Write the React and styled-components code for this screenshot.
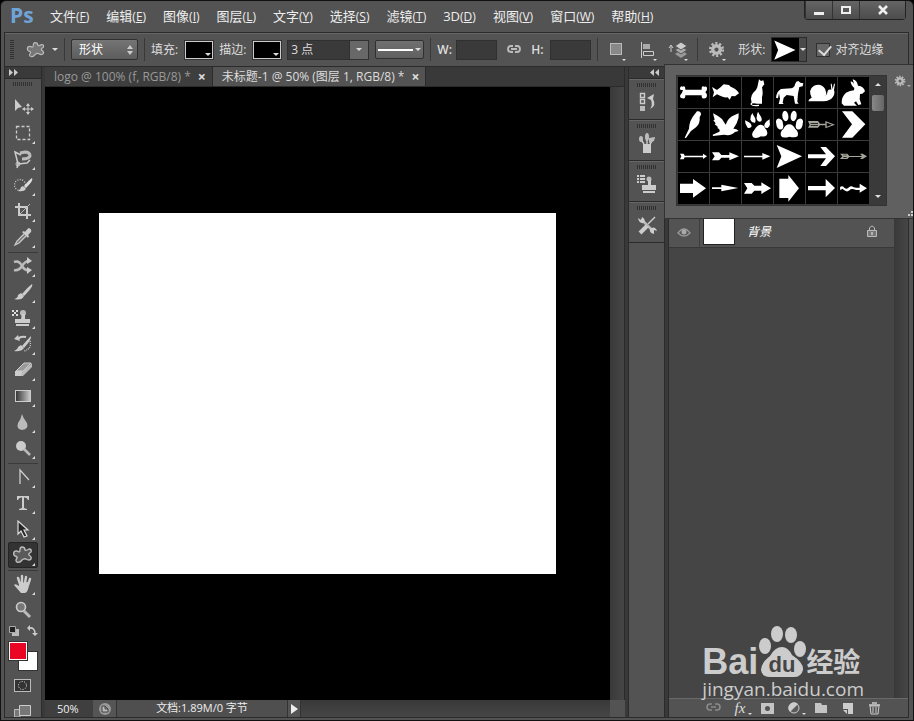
import styled, { createGlobalStyle, css } from "styled-components";

const menus = [
  ["文件", "F"],
  ["编辑", "E"],
  ["图像", "I"],
  ["图层", "L"],
  ["文字", "Y"],
  ["选择", "S"],
  ["滤镜", "T"],
  ["3D", "D"],
  ["视图", "V"],
  ["窗口", "W"],
  ["帮助", "H"],
];

const blob =
  "M12 5Q15 5 15 8Q16 9 19 7Q22 7 21 10Q18 12 19 13Q22 15 21 17Q19 19 16 17Q14 16 12 18Q10 21 7 20Q5 19 7 16Q8 15 5 14Q3 13 4 10Q6 8 9 10Q10 10 10 8Q10 5 12 5Z";

const tools = [
  {
    name: "移动",
    single: true,
    icon: (
      <>
        <path d="M5 5V17L8 14L12 13Z" fill="#ccc" />
        <path d="M18 10V20M13 15H23" stroke="#ccc" />
        <path
          d="M18 9L20 12H16ZM18 21L20 18H16ZM12 15L15 13V17ZM24 15L21 13V17Z"
          fill="#ccc"
        />
      </>
    ),
  },
  {
    name: "矩形选框",
    icon: (
      <rect
        x="6.5"
        y="6.5"
        width="13"
        height="13"
        fill="none"
        stroke="#ccc"
        strokeWidth="1.3"
        strokeDasharray="3 2"
      />
    ),
  },
  {
    name: "磁性套索",
    icon: (
      <>
        <path
          d="M11 9L5 6L8 18L17 17L20 14M8 18L7 22"
          fill="none"
          stroke="#ccc"
          strokeWidth="1.5"
        />
        <path
          d="M10 7L15 6Q20 6 20 10Q19 13 12 13"
          fill="none"
          stroke="#bbb"
          strokeWidth="3"
        />
        <circle cx="8" cy="18" r="2" fill="none" stroke="#ccc" />
      </>
    ),
  },
  {
    name: "快速选择",
    icon: (
      <>
        <circle
          cx="10"
          cy="13"
          r="5.5"
          fill="none"
          stroke="#ccc"
          strokeWidth="1.3"
          strokeDasharray="1 1.5"
        />
        <path d="M22 6Q24 8 16 16L14 14Q19 8 22 6Z" fill="#ddd" />
        <path d="M13 14L16 17Q14 20 8 19Q11 17 11 15Z" fill="#ccc" />
      </>
    ),
  },
  {
    name: "裁剪",
    icon: (
      <>
        <path
          d="M9 5V17H21M5 9H17V21"
          fill="none"
          stroke="#ccc"
          strokeWidth="2"
        />
        <path d="M9 17L20 6" stroke="#bbb" />
      </>
    ),
  },
  {
    name: "吸管",
    icon: (
      <>
        <path
          d="M14 10L7 17L5 21L9 19L16 12"
          fill="#777"
          stroke="#ccc"
          strokeWidth="1.2"
        />
        <path
          d="M12 8L18 14L19 12L18 11L21 8Q22 5 19 4Q18 4 15 8L14 7Z"
          fill="#ccc"
        />
      </>
    ),
    divider: true,
  },
  {
    name: "内容感知移动",
    icon: (
      <>
        <path
          d="M4 9Q9 7 12 13Q15 18 19 17M4 17Q9 18 12 13Q15 8 19 8"
          fill="none"
          stroke="#bbb"
          strokeWidth="2.5"
        />
        <path d="M17 4L22 8L17 11ZM17 14L22 17L17 21Z" fill="#ccc" />
      </>
    ),
  },
  {
    name: "画笔",
    icon: (
      <>
        <path d="M22 5Q24 7 14 17L12 15Q19 7 22 5Z" fill="#ccc" />
        <path d="M11 14L14 17Q12 22 4 20Q8 19 8 16Z" fill="#ccc" />
      </>
    ),
  },
  {
    name: "图案图章",
    icon: (
      <>
        <path
          d="M2 5H4V7H2ZM6 5H8V7H6ZM4 7H6V9H4ZM2 9H4V11H2ZM6 9H8V11H6Z"
          fill="#ddd"
        />
        <circle cx="13" cy="8" r="3" fill="#bbb" />
        <path d="M12 9H15V14H20V18H5V14H11ZM6 19H19V21H6Z" fill="#ccc" />
      </>
    ),
  },
  {
    name: "历史记录画笔",
    icon: (
      <>
        <path d="M21 5Q22 8 14 17L12 15Q18 8 21 5Z" fill="#ccc" />
        <path d="M11 14L14 17Q11 21 4 20Q8 18 8 16Z" fill="#ccc" />
        <path
          d="M16 6Q10 5 8 8"
          fill="none"
          stroke="#ccc"
          strokeWidth="2"
        />
        <path d="M4 8L8 4L10 10Z" fill="#ccc" />
        <path
          d="M20 10Q22 18 14 20"
          fill="none"
          stroke="#ccc"
          strokeWidth="1.3"
          strokeDasharray="1 1"
        />
      </>
    ),
  },
  {
    name: "橡皮擦",
    icon: (
      <>
        <path
          d="M14 6H21L13 14H6Z"
          fill="#999"
          stroke="#ccc"
          strokeWidth="1"
        />
        <path d="M5 14H13L12 19H5Z" fill="#ccc" />
        <path d="M13 14L22 6V10L13 19H11Z" fill="#bbb" />
      </>
    ),
  },
  {
    name: "渐变",
    icon: (
      <>
        <defs>
          <linearGradient id="toolGradient">
            <stop offset="0" stopColor="#333" />
            <stop offset="1" stopColor="#ccc" />
          </linearGradient>
        </defs>
        <rect
          x="5.5"
          y="7.5"
          width="15"
          height="11"
          fill="url(#toolGradient)"
          stroke="#ccc"
        />
      </>
    ),
  },
  {
    name: "模糊",
    icon: (
      <path
        d="M12 5Q13 9 17 14Q19 20 12 21Q6 20 8 14Q11 10 12 5Z"
        fill="#bbb"
      />
    ),
  },
  {
    name: "减淡",
    icon: (
      <>
        <circle cx="11" cy="11" r="5" fill="#ccc" />
        <path d="M14 14L20 20" stroke="#bbb" strokeWidth="2.5" />
      </>
    ),
    divider: true,
  },
  {
    name: "钢笔",
    icon: (
      <path d="M10 20V6L19 16" fill="none" stroke="#ccc" strokeWidth="1.3" />
    ),
  },
  {
    name: "横排文字",
    icon: (
      <path
        d="M7 6H19V10H18Q17 7 14 7.5V18L17 19V20H9V19L12 18V7.5Q9 7 8 10H7Z"
        fill="#ccc"
      />
    ),
  },
  {
    name: "路径选择",
    icon: (
      <path
        d="M8 5V18L11 15L14 21L17 20L14 14H18Z"
        fill="#252525"
        stroke="#ddd"
        strokeWidth="1.2"
      />
    ),
  },
  {
    name: "自定形状",
    active: true,
    icon: <path d={blob} fill="#5a5a5a" stroke="#bbb" strokeWidth="1.4" />,
    divider: true,
  },
  {
    name: "抓手",
    icon: (
      <>
        <path
          d="M10 13L8 7M12 12V5M15 12L16 6M18 14L20 8"
          stroke="#ccc"
          strokeWidth="2.4"
          strokeLinecap="round"
        />
        <path d="M9 12L19 11L19 14Q18 21 15 22H11L4 14Q5 12 9 15Z" fill="#ccc" />
      </>
    ),
  },
  {
    name: "缩放",
    single: true,
    icon: (
      <>
        <circle
          cx="11"
          cy="10"
          r="4.5"
          fill="#777"
          stroke="#ccc"
          strokeWidth="1.6"
        />
        <path d="M14 14L20 20" stroke="#bbb" strokeWidth="3" />
      </>
    ),
  },
];

const shapes = [
  {
    name: "骨头",
    d: "M15 39Q4 40 6 33Q8 26 14 29Q22 25 22 38H71Q70 25 79 29Q87 26 87 34Q89 40 82 46Q89 51 86 60Q84 65 78 64Q71 67 71 55H22Q22 67 14 64Q6 65 6 57Q7 53 12 47Z",
  },
  {
    name: "鱼",
    d: "M6 30L21 39Q34 30 41 22L57 24L62 29Q80 35 87 49L75 58L65 57L59 68L53 61Q40 63 21 52L8 61L12 46Z",
  },
  {
    name: "猫",
    d: "M51 7L57 12L64 10L67 22L60 31Q64 50 60 60V80H46L30 78Q22 60 35 46Q46 37 48 21ZM28 76L31 79Q26 85 42 84L51 83V87Q31 90 25 82Z",
  },
  {
    name: "狗",
    d: "M67 14L73 12L79 17L88 19L86 28L76 30L72 50L70 74L74 80H63L59 57L38 54L29 62L26 77L29 81H14L18 65L15 49L12 64L6 62Q8 43 21 36L52 34Q62 31 63 22Z",
  },
  {
    name: "蜗牛",
    d: "M7 73Q8 65 17 62Q5 38 24 26Q45 17 57 35Q63 47 59 57Q65 49 65 42Q67 37 76 38L74 20H77L80 37L84 20H87L84 39Q88 50 80 61Q72 72 53 73Z",
  },
  {
    name: "兔子",
    d: "M44 7Q57 10 60 26Q78 28 81 43L73 50L66 51L65 67L70 82L61 84L54 73L48 77L57 86H18L11 79Q10 60 24 47Q36 41 48 40L49 33Q38 24 38 13Q44 13 48 21Z",
  },
  {
    name: "鹦鹉",
    d: "M57 7Q69 5 69 17L65 24Q67 44 54 55L39 66L24 87L20 86L33 59Q34 34 50 16Z",
  },
  {
    name: "飞鸟",
    d: "M9 13L24 21L36 30L47 47Q54 26 74 18L86 13Q88 29 80 43L70 59Q79 58 86 66L75 69Q63 82 42 77L9 81L8 77L28 68Q32 62 22 57L24 54L14 46L17 43L10 34L14 32Z",
  },
  {
    name: "爪印",
    d: "M9 34L15 37Q28 42 29 52Q25 60 17 56Q9 48 9 34ZM31 12L35 20Q44 31 39 41Q30 43 25 32Q25 20 31 12ZM48 8L53 17Q62 27 58 37Q48 42 44 30Q43 17 48 8ZM83 31V40Q86 52 77 57Q66 58 67 48Q70 38 83 31ZM55 47Q65 46 69 58Q80 67 74 79Q68 84 57 82Q42 91 33 84Q26 74 37 63Q44 49 55 47Z",
  },
  {
    name: "脚印",
    d: "M7 45a10 14 -20 1 0 20 0a10 14 -20 1 0 -20 0ZM25 21a9 14 -8 1 0 18 0a9 14 -8 1 0 -18 0ZM50 21a9 14 8 1 0 18 0a9 14 8 1 0 -18 0ZM66 45a10 14 20 1 0 20 0a10 14 20 1 0 -20 0ZM46 46Q57 46 64 60Q75 69 71 81Q65 88 46 83Q28 89 21 81Q17 69 28 60Q34 46 46 46Z",
  },
  {
    name: "箭 1",
    muted: true,
    d: "M6 36H36L42 44H58L58 36L87 47L58 58V49H42L36 56H6L11 47ZM14 42V44H36V42ZM14 49V51H36V49ZM62 41V53L78 47Z",
  },
  { name: "V 形", d: "M12 7H43L82 46L43 86H12L42 46Z" },
  { name: "箭 2", d: "M6 38H17L20 44H75V38L87 46L75 54V49H20L17 55H6L10 46Z" },
  {
    name: "箭 3",
    d: "M6 34H27L34 42H58V34L87 46L58 58V50H34L27 58H6L14 46Z",
  },
  { name: "箭 4", d: "M6 44H61V36L85 46L61 56V49H6Z" },
  { name: "箭头", d: "M8 12L84 46L8 81L22 46Z" },
  { name: "箭 5", d: "M6 40H60L43 18H60L87 46L60 75H43L60 52H6Z" },
  {
    name: "箭 6",
    muted: true,
    d: "M6 38H28L34 45H72L66 38H74L87 46L74 54H66L72 48H34L28 54H6L13 46ZM16 41V43H26V41ZM16 49V51H26V49Z",
  },
  { name: "箭 7", d: "M6 32H45V18L84 46L45 74V60H6Z" },
  { name: "箭 8", d: "M6 43H34V35L85 45L34 55V48H6Z" },
  { name: "箭 9", d: "M6 30H29L37 38H58V28L87 46L58 63V53H37L29 62H6L16 46Z" },
  { name: "箭 10", d: "M16 17H43V6L75 46L43 86V75H16Z" },
  { name: "箭 11", d: "M6 39H59V18L87 45L59 73V52H6Z" },
  {
    name: "箭 12",
    d: "M6 43Q12 36 19 44Q26 51 33 43Q39 36 47 43L55 44H65V32L87 46L65 59V51H54Q44 47 38 49Q29 60 19 52L13 47L7 52Z",
  },
];

const docks = [
  {
    name: "历史记录",
    icon: (
      <>
        <path
          d="M4.5 2.5H8.5V6.5H4.5ZM4.5 8.5H8.5V12.5H4.5Z"
          fill="none"
          stroke="#ccc"
          strokeWidth="1.4"
        />
        <path d="M4 15H9V20H4Z" fill="#bbb" />
        <path d="M11 7L18 3L17 8Q21 15 14 18Q17 14 15 9Z" fill="#ccc" />
      </>
    ),
  },
  {
    name: "画笔预设",
    icon: (
      <>
        <path d="M7 12H15V21H7Z" fill="#ccc" />
        <path
          d="M8 12L4 6M11 12V5M14 12L18 6"
          stroke="#ccc"
          strokeWidth="1.4"
        />
        <ellipse cx="5" cy="7" rx="2" ry="3" fill="#bbb" />
        <ellipse cx="11" cy="5" rx="2" ry="4" fill="#bbb" />
        <path d="M13 6L19 5L18 9L13 11Z" fill="#bbb" />
      </>
    ),
  },
  {
    name: "仿制源",
    icon: (
      <>
        <path
          d="M1 3H9M1 6H9M1 9H9"
          stroke="#ccc"
          strokeWidth="2"
          strokeDasharray="2 1 5"
        />
        <circle cx="13" cy="6" r="2.5" fill="#bbb" />
        <path d="M12 7H15V12H20V17H6V12H12ZM7 18H19V20H7Z" fill="#ccc" />
      </>
    ),
  },
  {
    name: "工具预设",
    icon: (
      <>
        <path d="M6 6L17 17" stroke="#bbb" strokeWidth="2.5" />
        <path d="M19 3L12 10" stroke="#ccc" strokeWidth="1.5" />
        <path d="M11 12L4 19" stroke="#ccc" strokeWidth="4" />
        <path
          d="M2 4L5 6L6 3Q10 5 8 9Q3 10 2 4ZM14 15Q19 11 21 17L18 16L18 20Q13 19 14 15Z"
          fill="#ccc"
        />
      </>
    ),
  },
];

const layerActions = [
  {
    name: "链接图层",
    icon: (
      <g fill="none" stroke="#8b8b8b" strokeWidth="1.6">
        <path d="M9 4H7Q4 4 4 7T7 10H9M12 4H14Q17 4 17 7T14 10H12M8 7H13" />
      </g>
    ),
  },
  {
    name: "图层样式",
    more: true,
    fx: true,
  },
  {
    name: "添加蒙版",
    icon: (
      <path
        fillRule="evenodd"
        d="M4 3H17V14H4ZM10.5 6A2.5 2.5 0 1 0 10.5 11A2.5 2.5 0 1 0 10.5 6Z"
        fill="#c4c4c4"
      />
    ),
  },
  {
    name: "调整图层",
    more: true,
    icon: (
      <>
        <circle cx="10" cy="8" r="5" fill="#5a5a5a" stroke="#ccc" />
        <path d="M6 12L14 4A5.5 5.5 0 0 0 6 12Z" fill="#ccc" />
      </>
    ),
  },
  { name: "新建组", icon: <path d="M4 3H10L11 5H16V13H4Z" fill="#c4c4c4" /> },
  {
    name: "新建图层",
    icon: <path d="M5 3H15V14H10V9H5ZM5 10H9V14Z" fill="#ccc" />,
  },
  {
    name: "删除图层",
    icon: (
      <>
        <path d="M4 5H15M7 3H12" stroke="#ccc" strokeWidth="1.5" />
        <path d="M5 6H14L13 14H6ZM8 7V13M11 7V13" fill="none" stroke="#ccc" />
      </>
    ),
  },
];

function Gear({ size }) {
  return (
    <svg width={size} height={size} viewBox="0 0 18 18">
      <circle
        cx="9"
        cy="9"
        r="4"
        fill="none"
        stroke="#bbb"
        strokeWidth="3.5"
      />
      <circle
        cx="9"
        cy="9"
        r="6.5"
        fill="none"
        stroke="#bbb"
        strokeWidth="3"
        strokeDasharray="2.2 1.884"
      />
    </svg>
  );
}

function LinkIcon() {
  return (
    <svg width="16" height="12" viewBox="0 0 16 12">
      <path
        d="M7 2H5Q2 2 2 5T5 8H7M9 2H11Q14 2 14 5T11 8H9M5 5H11"
        fill="none"
        stroke="#bbb"
        strokeWidth="1.8"
      />
    </svg>
  );
}

function TitleBar() {
  return (
    <TitleRow>
      <Logo>Ps</Logo>
      <MenuNav>
        {menus.map(([label, key]) => (
          <MenuButton key={key}>
            {label}
            <Mnemonic>
              (<u>{key}</u>)
            </Mnemonic>
          </MenuButton>
        ))}
      </MenuNav>
      <WindowControls>
        <WindowButton aria-label="最小化">
          <svg width="12" height="12">
            <path d="M1 8H11V11H1Z" fill="#eee" />
          </svg>
        </WindowButton>
        <WindowButton aria-label="最大化">
          <svg width="12" height="12">
            <path d="M2 3H10V9H2Z" fill="none" stroke="#eee" strokeWidth="2" />
          </svg>
        </WindowButton>
        <WindowButton aria-label="关闭" $wide>
          <svg width="12" height="12">
            <path d="M2 2L10 10M10 2L2 10" stroke="#eee" strokeWidth="2.5" />
          </svg>
        </WindowButton>
      </WindowControls>
    </TitleRow>
  );
}

function OptionsBar() {
  return (
    <OptionsRow>
      <Grip $upright />
      <CurrentTool aria-label="自定形状工具">
        <svg width="24" height="24" viewBox="0 0 26 26">
          <path d={blob} fill="#777" stroke="#bbb" strokeWidth="1.2" />
        </svg>
        <Caret />
      </CurrentTool>
      <Rule />
      <ModeWrap>
        <ModeSelect aria-label="工具模式" defaultValue="形状">
          <option>形状</option>
          <option>路径</option>
          <option>像素</option>
        </ModeSelect>
        <svg width="6" height="10">
          <path d="M3 0L6 4H0ZM0 6H6L3 10Z" fill="#ccc" />
        </svg>
      </ModeWrap>
      <Rule />
      <Field $wide>
        <span>填充:</span>
        <Swatch aria-label="填充颜色">
          <Caret />
        </Swatch>
      </Field>
      <Field $wide>
        <span>描边:</span>
        <Swatch aria-label="描边颜色">
          <Caret />
        </Swatch>
      </Field>
      <Combo>
        <ComboInput aria-label="描边宽度" defaultValue="3 点" />
        <ComboButton aria-label="选择描边宽度">
          <Caret />
        </ComboButton>
      </Combo>
      <LineButton aria-label="描边类型">
        <Stroke />
        <Caret />
      </LineButton>
      <Rule />
      <Field>
        <Axis htmlFor="shapeWidth">W:</Axis>
        <SizeInput id="shapeWidth" />
      </Field>
      <LinkButton aria-label="链接宽高">
        <LinkIcon />
      </LinkButton>
      <Field>
        <Axis htmlFor="shapeHeight">H:</Axis>
        <SizeInput id="shapeHeight" />
      </Field>
      <Rule />
      <IconButton aria-label="路径操作" $more>
        <svg width="18" height="18">
          <rect
            x="2.5"
            y="2.5"
            width="11"
            height="11"
            fill="#888"
            stroke="#bbb"
          />
        </svg>
      </IconButton>
      <IconButton aria-label="路径对齐" $more>
        <svg width="18" height="18">
          <path d="M2.5 1V17" stroke="#ccc" />
          <path d="M4 3H11V8H4Z" fill="#aaa" />
          <path d="M4.5 10.5H14.5V14.5H4.5Z" fill="none" stroke="#ccc" />
        </svg>
      </IconButton>
      <IconButton aria-label="路径排列" $more>
        <svg width="22" height="18">
          <path d="M3 5V11M1 7L3 4L5 7" fill="none" stroke="#ccc" />
          <path d="M7 13L13 9L19 13L13 17Z" fill="#999" />
          <path d="M7 9L13 5L19 9L13 13Z" fill="#aaa" stroke="#555" />
          <path d="M7 5L13 1L19 5L13 9Z" fill="#ccc" stroke="#555" />
        </svg>
      </IconButton>
      <Rule />
      <IconButton aria-label="几何选项" $more>
        <Gear size={17} />
      </IconButton>
      <ShapeField>
        <span>形状:</span>
        <ShapeButton aria-label="选择形状">
          <svg width="26" height="24" viewBox="0 6 93 80">
            <path d={shapes[15].d} fill="#fff" />
          </svg>
          <Caret />
        </ShapeButton>
      </ShapeField>
      <CheckField>
        <input type="checkbox" defaultChecked />
        对齐边缘
      </CheckField>
    </OptionsRow>
  );
}

function ToolPanel() {
  return (
    <ToolColumn>
      <PanelTop>
        <svg width="10" height="7">
          <path d="M0 0L4 3.5L0 7ZM5 0L9 3.5L5 7Z" fill="#ccc" />
        </svg>
      </PanelTop>
      <GripRow>
        <Grip />
      </GripRow>
      {tools.map((tool) => (
        <ToolSlot key={tool.name} $divider={tool.divider}>
          <ToolButton aria-label={tool.name} $active={tool.active}>
            <svg width="26" height="26" viewBox="0 0 26 26">
              {tool.icon}
              {!tool.single && <path d="M25 21V24H22Z" fill="#ddd" />}
            </svg>
          </ToolButton>
        </ToolSlot>
      ))}
      <MiniRow>
        <MiniButton aria-label="默认颜色">
          <svg width="12" height="12">
            <path d="M4 4H11V11H4Z" fill="#bbb" />
            <path d="M1.5 1.5H7.5V7.5H1.5Z" fill="#222" stroke="#aaa" />
          </svg>
        </MiniButton>
        <MiniButton aria-label="切换颜色">
          <svg width="12" height="12">
            <path
              d="M3 3Q9 2 9 9"
              fill="none"
              stroke="#ccc"
              strokeWidth="1.5"
            />
            <path d="M1 3L4 0V6ZM6 8H12L9 11Z" fill="#ccc" />
          </svg>
        </MiniButton>
      </MiniRow>
      <Colors>
        <ColorChip aria-label="背景色" $color="#fff" $back />
        <ColorChip aria-label="前景色" $color="#eb0524" />
      </Colors>
      <MaskButton aria-label="快速蒙版">
        <svg width="18" height="14">
          <rect
            x="0.5"
            y="0.5"
            width="16"
            height="12"
            fill="#333"
            stroke="#bbb"
          />
          <circle
            cx="8.5"
            cy="6.5"
            r="4"
            fill="none"
            stroke="#eee"
            strokeDasharray="1 1.5"
          />
        </svg>
      </MaskButton>
      <MaskButton aria-label="屏幕模式">
        <svg width="18" height="14">
          <path d="M0.5 4.5H6V12H0.5Z" fill="#777" stroke="#bbb" />
          <path d="M5.5 0.5H16.5V10.5H5.5Z" fill="#777" stroke="#ccc" />
        </svg>
      </MaskButton>
    </ToolColumn>
  );
}

function DocumentArea() {
  return (
    <DocumentColumn>
      <Tabs>
        <Tab>
          <TabName>logo @ 100% (f, RGB/8) *</TabName>
          <TabClose aria-label="关闭 logo">×</TabClose>
        </Tab>
        <Tab $active>
          <TabName>未标题-1 @ 50% (图层 1, RGB/8) *</TabName>
          <TabClose aria-label="关闭 未标题-1">×</TabClose>
        </Tab>
      </Tabs>
      <CanvasRow>
        <Stage>
          <Artboard />
        </Stage>
        <Track />
      </CanvasRow>
      <StatusRow>
        <ZoomInput aria-label="缩放" defaultValue="50%" />
        <StatusButton aria-label="共享">
          <svg width="14" height="14">
            <circle cx="7" cy="7" r="6" fill="#999" />
            <path d="M4 4H7L10 7V10H4ZM7 4V7H10" fill="#bbb" stroke="#444" />
          </svg>
        </StatusButton>
        <StatusText>文档:1.89M/0 字节</StatusText>
        <StatusButton aria-label="状态选项" $narrow>
          <svg width="8" height="10">
            <path d="M1 0L8 5L1 10Z" fill="#eee" />
          </svg>
        </StatusButton>
        <StatusTrack />
        <StatusCorner />
      </StatusRow>
    </DocumentColumn>
  );
}

function Dock() {
  return (
    <DockColumn>
      <PanelTop $dock>
        <svg width="10" height="7">
          <path d="M4 0L0 3.5L4 7ZM9 0L5 3.5L9 7Z" fill="#ccc" />
        </svg>
      </PanelTop>
      {docks.map((item) => (
        <DockItem key={item.name}>
          <Grip />
          <DockButton aria-label={item.name}>
            <svg width="22" height="22" viewBox="0 0 22 22">
              {item.icon}
            </svg>
          </DockButton>
        </DockItem>
      ))}
    </DockColumn>
  );
}

function LayersPanel() {
  return (
    <LayersColumn>
      <LayersHeader />
      <LayersBody>
        <LayerList>
          <Layer>
            <EyeButton aria-label="可见性">
              <svg width="14" height="10">
                <path
                  d="M1 6Q7 -2 13 6Q7 12 1 6Z"
                  fill="none"
                  stroke="#999"
                  strokeWidth="1.3"
                />
                <circle cx="7" cy="5" r="2.5" fill="#aaa" />
              </svg>
            </EyeButton>
            <Thumb />
            <LayerName>背景</LayerName>
            <svg width="12" height="13">
              <path d="M3.5 6V3Q6 -1 8.5 3V6" fill="none" stroke="#bbb" />
              <path
                d="M1.5 5.5H10.5V11.5H1.5Z"
                fill="#777"
                stroke="#bbb"
              />
              <path d="M6 7V10" stroke="#eee" />
            </svg>
          </Layer>
        </LayerList>
        <LayerTrack />
      </LayersBody>
      <LayersFooter>
        {layerActions.map((action) => (
          <LayerAction
            key={action.name}
            aria-label={action.name}
            $more={action.more}
          >
            {action.fx ? (
              <Fx>fx</Fx>
            ) : (
              <svg width="21" height="16">
                {action.icon}
              </svg>
            )}
          </LayerAction>
        ))}
      </LayersFooter>
    </LayersColumn>
  );
}

function ShapePicker() {
  return (
    <Picker>
      <PickerBox>
        <ShapeGrid>
          {shapes.map((shape) => (
            <ShapeCell key={shape.name} aria-label={shape.name}>
              <svg width="31" height="31" viewBox="0 0 93 93">
                <path
                  d={shape.d}
                  fill={shape.muted ? "#a5a59b" : "#fff"}
                  fillRule="evenodd"
                />
              </svg>
            </ShapeCell>
          ))}
        </ShapeGrid>
        <PickerScroll>
          <Caret $up />
          <PickerThumb />
          <Caret />
        </PickerScroll>
      </PickerBox>
      <PickerGear aria-label="形状选项">
        <Gear size={12} />
        <SmallCaret />
      </PickerGear>
      <ResizeMark width="5" height="5">
        <path d="M3 0H5V2H3ZM0 3H2V5H0ZM3 3H5V5H3Z" fill="#ccc" />
      </ResizeMark>
    </Picker>
  );
}

function Watermark() {
  return (
    <Mark>
      <MarkRow>
        <MarkLatin>Bai</MarkLatin>
        <svg width="48" height="53" viewBox="2 1 48 53">
          <g fill="#ccc">
            <ellipse cx="9" cy="22" rx="6" ry="8" />
            <ellipse cx="21" cy="10" rx="6" ry="8" />
            <ellipse cx="35" cy="11" rx="6" ry="8" />
            <ellipse cx="44" cy="25" rx="6" ry="8" />
            <path d="M26 23Q32 23 36 31Q48 39 47 46Q45 54 36 53H16Q6 54 5 46Q5 39 14 32Q19 23 26 23Z" />
          </g>
          <text
            x="26"
            y="48"
            textAnchor="middle"
            fill="#454545"
            fontFamily="Liberation Sans"
            fontSize="22"
            fontWeight="700"
          >
            du
          </text>
        </svg>
        <MarkChinese>经验</MarkChinese>
      </MarkRow>
      <MarkUrl>jingyan.baidu.com</MarkUrl>
    </Mark>
  );
}

export default function App() {
  return (
    <Window>
      <GlobalStyle />
      <TitleBar />
      <OptionsBar />
      <Workspace>
        <ToolPanel />
        <DocumentArea />
        <Dock />
        <LayersPanel />
      </Workspace>
      <ShapePicker />
      <Watermark />
    </Window>
  );
}

const GlobalStyle = createGlobalStyle`
  * {
    box-sizing: border-box;
  }
  body {
    margin: 0;
    background: #000;
    color: #ddd;
    font-family: "Open Sans", "Noto Sans CJK SC", sans-serif;
    font-size: 12px;
    line-height: 16px;
  }
  button,
  input,
  select {
    margin: 0;
    padding: 0;
    border: 0;
    border-radius: 0;
    background: none;
    color: inherit;
    font: inherit;
  }
  svg {
    display: block;
    flex: none;
  }
`;

const center = css`
  display: flex;
  align-items: center;
  justify-content: center;
`;

const Window = styled.div`
  position: relative;
  display: flex;
  flex-direction: column;
  height: 100vh;
  overflow: hidden;
  background: #535353;
  border: 1px solid #111;
  border-radius: 6px 6px 0 0;
  padding: 0 4px 2px 3px;
`;

const TitleRow = styled.header`
  display: flex;
  height: 31px;
  flex: none;
  padding-right: 3px;
`;

const Logo = styled.div`
  width: 40px;
  padding-left: 6px;
  color: #70a4d8;
  font-size: 21px;
  font-weight: 700;
  line-height: 28px;
`;

const MenuNav = styled.nav`
  display: flex;
  flex: 1;
  gap: 17px;
  padding: 0 0 1px 6px;
`;

const MenuButton = styled.button`
  font-size: 13px;
  white-space: nowrap;
  color: #eee;
`;

const Mnemonic = styled.span`
  font-size: 12px;
`;

const WindowControls = styled.div`
  display: flex;
  height: 19px;
  border: 1px solid #222;
  border-top: 0;
  border-radius: 0 0 4px 4px;
`;

const WindowButton = styled.button`
  ${center}
  width: ${(p) => (p.$wide ? 46 : 27)}px;
  background: linear-gradient(#656565, #4c4c4c);
  border-left: 1px solid #333;
`;

const OptionsRow = styled.div`
  display: flex;
  align-items: center;
  gap: 6px;
  height: 34px;
  flex: none;
  padding-left: 5px;
  border: 1px solid #2b2b2b;
  border-bottom: 0;
  box-shadow: inset 0 1px #666;
  white-space: nowrap;
`;

const Grip = styled.div`
  flex: none;
  width: ${(p) => (p.$upright ? 4 : 20)}px;
  height: ${(p) => (p.$upright ? 20 : 4)}px;
  background: repeating-linear-gradient(
    ${(p) => (p.$upright ? "180deg" : "90deg")},
    #303030 0 1px,
    #555 1px 2px
  );
`;

const Caret = styled.i`
  border: 3px solid transparent;
  ${(p) =>
    p.$up
      ? "border-bottom-color: #ddd; border-top: 0;"
      : "border-top-color: #ddd; border-bottom: 0;"}
`;

const SmallCaret = styled.i`
  border: 2px solid transparent;
  border-top-color: #aaa;
  border-bottom: 0;
`;

const CurrentTool = styled.button`
  display: flex;
  align-items: center;
  gap: 4px;
  padding-left: 4px;
`;

const Rule = styled.div`
  flex: none;
  width: 1px;
  height: 23px;
  background: #383838;
`;

const ModeWrap = styled.div`
  display: flex;
  align-items: center;
  width: 67px;
  height: 21px;
  padding-right: 4px;
  background: linear-gradient(#757575, #5c5c5c);
  border: 1px solid #303030;
  border-radius: 2px;
`;

const ModeSelect = styled.select`
  appearance: none;
  flex: 1;
  min-width: 0;
  padding-left: 7px;
  color: #fff;
`;

const Field = styled.div`
  display: flex;
  align-items: center;
  gap: ${(p) => (p.$wide ? 7 : 5)}px;
`;

const ShapeField = styled(Field)`
  gap: 6px;
  padding: 0 3px;
`;

const Swatch = styled.button`
  display: flex;
  align-items: flex-end;
  justify-content: flex-end;
  width: 28px;
  height: 18px;
  padding: 0 1px 2px 0;
  background: #000;
  border: 1px solid #ccc;
  box-shadow: 0 0 0 1px #333;
`;

const Combo = styled.div`
  display: flex;
  height: 20px;
  border: 1px solid #303030;
`;

const ComboInput = styled.input`
  width: 61px;
  padding-left: 3px;
  background: #3a3a3a;
`;

const ComboButton = styled.button`
  ${center}
  width: 19px;
  background: #686868;
  border-left: 1px solid #303030;
`;

const LineButton = styled.button`
  ${center}
  gap: 2px;
  width: 49px;
  height: 19px;
  background: linear-gradient(#707070, #606060);
  border: 1px solid #303030;
  border-radius: 2px;
`;

const Stroke = styled.span`
  width: 35px;
  height: 2px;
  background: #fff;
`;

const Axis = styled.label`
  width: 14px;
  font-weight: 600;
`;

const SizeInput = styled.input`
  width: 41px;
  height: 20px;
  background: #3a3a3a;
  border: 1px solid #303030;
`;

const IconButton = styled.button`
  ${center}
  position: relative;
  width: 25px;
  height: 26px;
  ${(p) =>
    p.$more &&
    css`
      &::after {
        content: "";
        position: absolute;
        right: 3px;
        bottom: 2px;
        border: 2px solid transparent;
        border-top-color: #ddd;
        border-bottom: 0;
      }
    `}
`;

const LinkButton = styled(IconButton)`
  width: 22px;
`;

const ShapeButton = styled.button`
  display: flex;
  align-items: center;
  gap: 2px;
  width: 36px;
  height: 25px;
  background: linear-gradient(90deg, #000 27px, #4a4a4a 27px);
  border: 1px solid #2b2b2b;
`;

const CheckField = styled.label`
  display: flex;
  align-items: center;
  gap: 5px;
  input {
    appearance: none;
    width: 14px;
    height: 14px;
    background: #666;
    border: 1px solid #303030;
  }
  input:checked::before {
    content: "";
    display: block;
    width: 6px;
    height: 10px;
    margin: -1px 0 0 4px;
    border: solid #ddd;
    border-width: 0 2px 2px 0;
    transform: rotate(40deg);
  }
`;

const Workspace = styled.main`
  display: flex;
  flex: 1;
  min-height: 0;
  gap: 3px;
  background: #393939;
  border: 1px solid #2b2b2b;
`;

const ToolColumn = styled.aside`
  display: flex;
  flex-direction: column;
  align-items: center;
  width: 37px;
  flex: none;
  overflow: hidden;
  background: #535353;
  border-right: 1px solid #2b2b2b;
`;

const PanelTop = styled.div`
  display: flex;
  align-items: center;
  align-self: stretch;
  justify-content: ${(p) => (p.$dock ? "flex-end" : "flex-start")};
  height: 12px;
  flex: none;
  padding: 0 4px;
  background: #3a3a3a;
  border-bottom: 1px solid #2b2b2b;
`;

const GripRow = styled.div`
  height: 15px;
  flex: none;
  padding-top: 3px;
`;

const ToolSlot = styled.div`
  flex: none;
  padding-bottom: ${(p) => (p.$divider ? 2 : 0)}px;
  border-bottom: ${(p) => (p.$divider ? 1 : 0)}px solid #3a3a3a;
`;

const ToolButton = styled.button`
  ${center}
  width: 30px;
  height: 26px;
  ${(p) =>
    p.$active &&
    css`
      background: #333;
      border: 1px solid #252525;
      border-radius: 2px;
    `}
`;

const MiniRow = styled.div`
  display: flex;
  gap: 6px;
  height: 15px;
  flex: none;
  align-items: center;
`;

const MiniButton = styled.button`
  ${center}
  width: 12px;
`;

const Colors = styled.div`
  position: relative;
  width: 30px;
  height: 30px;
  flex: none;
  margin: 3px 0 2px;
`;

const ColorChip = styled.button`
  position: absolute;
  width: 20px;
  height: 20px;
  background: ${(p) => p.$color};
  border: 1px solid #333;
  box-shadow: inset 0 0 0 1px #fff;
  ${(p) => (p.$back ? "right: 0; bottom: 0;" : "left: 0; top: 0;")}
`;

const MaskButton = styled.button`
  ${center}
  width: 30px;
  height: 26px;
  flex: none;
`;

const DocumentColumn = styled.section`
  display: flex;
  flex-direction: column;
  flex: 1;
  min-width: 0;
`;

const Tabs = styled.div`
  display: flex;
  height: 20px;
  flex: none;
  border-bottom: 1px solid #2b2b2b;
  border-right: 1px solid #2b2b2b;
`;

const Tab = styled.div`
  display: flex;
  align-items: center;
  gap: 7px;
  padding: 0 6px 0 9px;
  border-right: 1px solid #2b2b2b;
  background: ${(p) => (p.$active ? "#535353" : "#3e3e3e")};
  color: ${(p) => (p.$active ? "#ddd" : "#999")};
  white-space: nowrap;
`;

const TabName = styled.button``;

const TabClose = styled.button`
  width: 8px;
  color: #ddd;
  font-size: 14px;
  font-weight: 700;
`;

const CanvasRow = styled.div`
  display: flex;
  flex: 1;
  min-height: 0;
`;

const Stage = styled.div`
  ${center}
  flex: 1;
  background: #000;
`;

const Artboard = styled.div`
  width: 81%;
  aspect-ratio: 457 / 361;
  background: #fff;
`;

const Track = styled.div`
  width: 15px;
  background: linear-gradient(90deg, #393939, #464646);
  border-right: 1px solid #2b2b2b;
`;

const StatusRow = styled.footer`
  display: flex;
  height: 17px;
  flex: none;
  font-size: 11px;
`;

const ZoomInput = styled.input`
  width: 48px;
  padding-left: 12px;
  background: #3f3f3f;
  color: #eee;
`;

const StatusButton = styled.button`
  ${center}
  width: ${(p) => (p.$narrow ? 13 : 24)}px;
  background: #555;
  border-right: 1px solid #333;
`;

const StatusText = styled.div`
  width: 171px;
  background: #4f4f4f;
  border-right: 1px solid #333;
  color: #eee;
  text-align: center;
`;

const StatusTrack = styled.div`
  flex: 1;
  background: linear-gradient(#393939, #464646);
`;

const StatusCorner = styled.div`
  width: 15px;
  background: #535353;
`;

const DockColumn = styled.aside`
  width: 37px;
  flex: none;
  background: #535353;
  border-left: 1px solid #2b2b2b;
  border-right: 1px solid #2b2b2b;
`;

const DockItem = styled.div`
  display: flex;
  flex-direction: column;
  align-items: center;
  gap: 4px;
  height: 41px;
  padding-top: 4px;
  border-bottom: 1px solid #2b2b2b;
  box-shadow: inset 0 1px #666;
`;

const DockButton = styled.button`
  ${center}
  width: 30px;
`;

const LayersColumn = styled.aside`
  display: flex;
  flex-direction: column;
  width: 240px;
  flex: none;
  border-left: 1px solid #2b2b2b;
`;

const LayersHeader = styled.div`
  height: 149px;
  flex: none;
  background: #535353;
`;

const LayersBody = styled.div`
  display: flex;
  flex: 1;
  min-height: 0;
`;

const LayerList = styled.div`
  flex: 1;
  background: #454545;
`;

const Layer = styled.div`
  display: flex;
  align-items: center;
  height: 32px;
  padding-right: 16px;
  background: #535353;
  border-bottom: 1px solid #383838;
`;

const EyeButton = styled.button`
  ${center}
  width: 31px;
  height: 31px;
  border-right: 1px solid #3d3d3d;
`;

const Thumb = styled.div`
  width: 32px;
  height: 27px;
  margin: 0 12px 0 3px;
  background: #fff;
  border: 1px solid #222;
`;

const LayerName = styled.div`
  flex: 1;
  color: #fff;
  font-style: italic;
`;

const LayerTrack = styled.div`
  width: 14px;
  background: linear-gradient(90deg, #393939, #464646);
`;

const LayersFooter = styled.footer`
  display: flex;
  justify-content: center;
  height: 19px;
  flex: none;
  gap: 2px;
  padding-left: 11px;
  background: #535353;
  border-top: 1px solid #696969;
`;

const LayerAction = styled(IconButton)`
  height: 18px;
  &::after {
    right: 1px;
  }
`;

const Fx = styled.span`
  font-family: "Liberation Serif", serif;
  font-size: 15px;
  font-style: italic;
  line-height: 12px;
`;

const Picker = styled.div`
  position: absolute;
  top: 63px;
  right: -1px;
  display: flex;
  align-items: flex-start;
  gap: 7px;
  width: 250px;
  height: 155px;
  padding: 10px 0 0 11px;
  background: #606060;
  border: 1px solid #333;
`;

const PickerBox = styled.div`
  display: flex;
  width: 211px;
  height: 131px;
  background: #3a3a3a;
  border: 1px solid #333;
`;

const ShapeGrid = styled.div`
  display: grid;
  grid-template-columns: repeat(6, 31px);
  gap: 1px;
  align-content: start;
  padding: 1px;
`;

const ShapeCell = styled.button`
  height: 31px;
  background: #000;
`;

const PickerScroll = styled.div`
  display: flex;
  flex-direction: column;
  align-items: center;
  width: 15px;
  padding: 7px 0;
`;

const PickerThumb = styled.div`
  width: 12px;
  height: 16px;
  margin: 9px 0 auto;
  background: linear-gradient(90deg, #888, #666);
  border-radius: 2px;
`;

const PickerGear = styled.button`
  display: flex;
  align-items: flex-end;
  gap: 1px;
`;

const ResizeMark = styled.svg`
  position: absolute;
  right: 0;
  bottom: 2px;
`;

const Mark = styled.div`
  position: absolute;
  right: 49px;
  bottom: 20px;
  color: #ccc;
`;

const MarkRow = styled.div`
  display: flex;
  align-items: flex-end;
`;

const MarkLatin = styled.span`
  font: 700 36px/32px "Liberation Sans", sans-serif;
`;

const MarkChinese = styled.span`
  font-size: 27px;
  font-weight: 700;
  line-height: 32px;
`;

const MarkUrl = styled.div`
  font-size: 19px;
  line-height: 22px;
`;
